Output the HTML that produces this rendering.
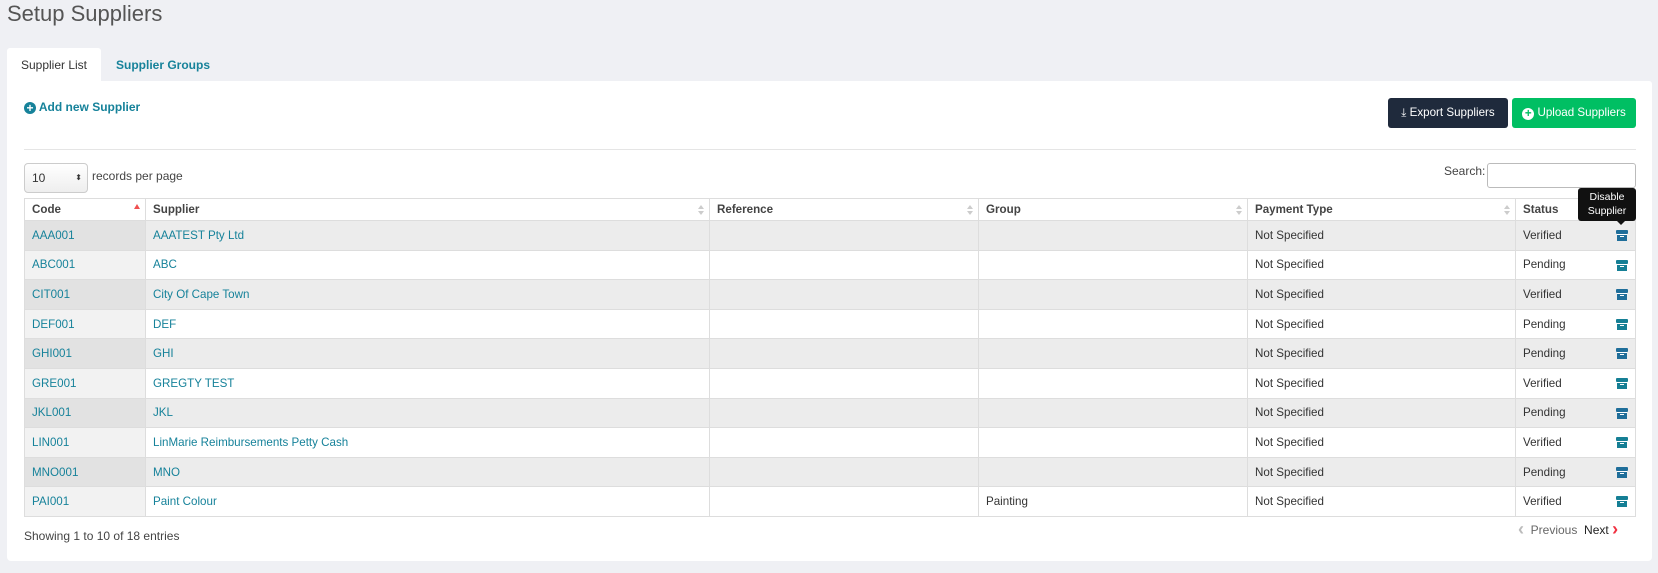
<!DOCTYPE html>
<html><head><meta charset="utf-8"><style>
*{box-sizing:border-box;margin:0;padding:0}
body{width:1658px;height:573px;background:#eff0f4;font-family:"Liberation Sans",sans-serif;color:#333;position:relative;overflow:hidden;font-size:11.6px}
.a{position:absolute}
h1{position:absolute;left:7px;top:1px;font-weight:300;font-size:22px;color:#555}
.tab{position:absolute;top:48px;height:34px;line-height:34px;font-size:12px}
.panel{position:absolute;left:7px;top:81px;width:1645px;height:480px;background:#fff;border-radius:0 3px 4px 4px}
.link{color:#16829a}
.btn{position:absolute;top:98px;height:30px;line-height:30px;color:#fff;font-size:11.6px;border-radius:3px;text-align:center}
table{position:absolute;left:24px;top:198px;width:1612px;border-collapse:collapse;font-size:11.6px;table-layout:fixed}
td,th{border:1px solid #ddd;height:29.6px;padding:0 7px;text-align:left;position:relative}
th{height:22px;font-weight:bold;color:#444}
tr.o td{background:#ececec}
tr.o td:first-child{background:#e2e2e2}
tr.e td:first-child{background:#f2f2f2}
td a{color:#16829a}
.s{position:absolute;right:5px;top:6px;width:6px;height:10px}
.s:before{content:"";position:absolute;top:0;left:0;border:3px solid transparent;border-bottom:4px solid #ccc;border-top:0}
.s:after{content:"";position:absolute;top:6px;left:0;border:3px solid transparent;border-top:4px solid #ccc;border-bottom:0}
.ic{position:absolute;right:7px;top:9px;width:12px;height:11px}
.ic:before{content:"";position:absolute;left:0;top:0;width:12px;height:4px;background:#157f95;border-radius:1px}
.ic:after{content:"";position:absolute;left:1px;top:4px;width:10px;height:7px;background:#157f95;box-shadow:inset 0 1px 0 #fff}
.ic b{position:absolute;left:4px;top:6px;width:4px;height:1px;background:#fff;z-index:1}
tr.o .ic:before,tr.o .ic:after{background:#1f6e9a}
</style></head><body>
<h1>Setup Suppliers</h1>
<div class="tab" style="left:7px;width:94px;background:#fff;text-align:center;color:#333;border-radius:3px 3px 0 0">Supplier List</div>
<div class="tab link" style="left:116px;font-weight:bold">Supplier Groups</div>
<div class="panel"></div>
<div class="a link" style="left:24px;top:100px;font-size:12px;font-weight:bold"><span style="display:inline-block;width:12px;height:12px;border-radius:50%;background:#16829a;color:#fff;text-align:center;line-height:12px;font-size:12px;vertical-align:-1px">+</span> Add new Supplier</div>
<div class="btn" style="left:1388px;width:120px;background:#1f2a3c">⤓ Export Suppliers</div>
<div class="btn" style="left:1512px;width:124px;background:#00bf63"><span style="display:inline-block;width:12px;height:12px;border-radius:50%;background:#fff;color:#00bf63;line-height:12px;font-weight:bold;vertical-align:-1px">+</span> Upload Suppliers</div>
<div class="a" style="left:24px;top:149px;width:1612px;height:1px;background:#e5e5e5"></div>
<div class="a" style="left:24px;top:163px;width:64px;height:30px;border:1px solid #ccc;border-radius:4px;background:linear-gradient(#fff,#eee);line-height:28px;padding-left:7px;font-size:12px">10<span style="position:absolute;right:5px;font-size:8px">⬍</span></div>
<div class="a" style="left:92px;top:169px;font-size:12px;color:#444">records per page</div>
<div class="a" style="left:1444px;top:164px;font-size:12px;color:#444">Search:</div>
<div class="a" style="left:1487px;top:163px;width:149px;height:25px;border:1px solid #bbb;border-radius:3px"></div>
<table>
<colgroup><col style="width:121px"><col style="width:564px"><col style="width:269px"><col style="width:269px"><col style="width:268px"><col></colgroup>
<tr><th>Code<span style="position:absolute;right:5px;top:5px;border:3px solid transparent;border-bottom:5px solid #f05050;border-top:0"></span></th><th>Supplier<span class="s"></span></th><th>Reference<span class="s"></span></th><th>Group<span class="s"></span></th><th>Payment Type<span class="s"></span></th><th>Status</th></tr>
<tr class="o"><td><a>AAA001</a></td><td><a>AAATEST Pty Ltd</a></td><td></td><td></td><td>Not Specified</td><td>Verified<i class="ic"><b></b></i></td></tr>
<tr class="e"><td><a>ABC001</a></td><td><a>ABC</a></td><td></td><td></td><td>Not Specified</td><td>Pending<i class="ic"><b></b></i></td></tr>
<tr class="o"><td><a>CIT001</a></td><td><a>City Of Cape Town</a></td><td></td><td></td><td>Not Specified</td><td>Verified<i class="ic"><b></b></i></td></tr>
<tr class="e"><td><a>DEF001</a></td><td><a>DEF</a></td><td></td><td></td><td>Not Specified</td><td>Pending<i class="ic"><b></b></i></td></tr>
<tr class="o"><td><a>GHI001</a></td><td><a>GHI</a></td><td></td><td></td><td>Not Specified</td><td>Pending<i class="ic"><b></b></i></td></tr>
<tr class="e"><td><a>GRE001</a></td><td><a>GREGTY TEST</a></td><td></td><td></td><td>Not Specified</td><td>Verified<i class="ic"><b></b></i></td></tr>
<tr class="o"><td><a>JKL001</a></td><td><a>JKL</a></td><td></td><td></td><td>Not Specified</td><td>Pending<i class="ic"><b></b></i></td></tr>
<tr class="e"><td><a>LIN001</a></td><td><a>LinMarie Reimbursements Petty Cash</a></td><td></td><td></td><td>Not Specified</td><td>Verified<i class="ic"><b></b></i></td></tr>
<tr class="o"><td><a>MNO001</a></td><td><a>MNO</a></td><td></td><td></td><td>Not Specified</td><td>Pending<i class="ic"><b></b></i></td></tr>
<tr class="e"><td><a>PAI001</a></td><td><a>Paint Colour</a></td><td></td><td>Painting</td><td>Not Specified</td><td>Verified<i class="ic"><b></b></i></td></tr>
</table>
<div class="a" style="left:1578px;top:188px;width:58px;height:33px;background:#111;color:#fff;border-radius:3px;font-size:10.5px;text-align:center;line-height:14px;padding-top:2px">Disable<br>Supplier</div>
<div class="a" style="left:1617px;top:221px;border:4px solid transparent;border-top:4px solid #111;border-bottom:0"></div>
<div class="a" style="left:24px;top:529px;font-size:12px;color:#444">Showing 1 to 10 of 18 entries</div>
<div class="a" style="left:1518px;top:519px;font-size:12px;color:#666"><span style="color:#bbb;font-weight:bold;font-size:18px;vertical-align:-1px">‹</span>&nbsp; Previous &nbsp;<span style="color:#222">Next</span> <span style="color:#f03040;font-weight:bold;font-size:18px;vertical-align:-1px">›</span></div>
</body></html>
